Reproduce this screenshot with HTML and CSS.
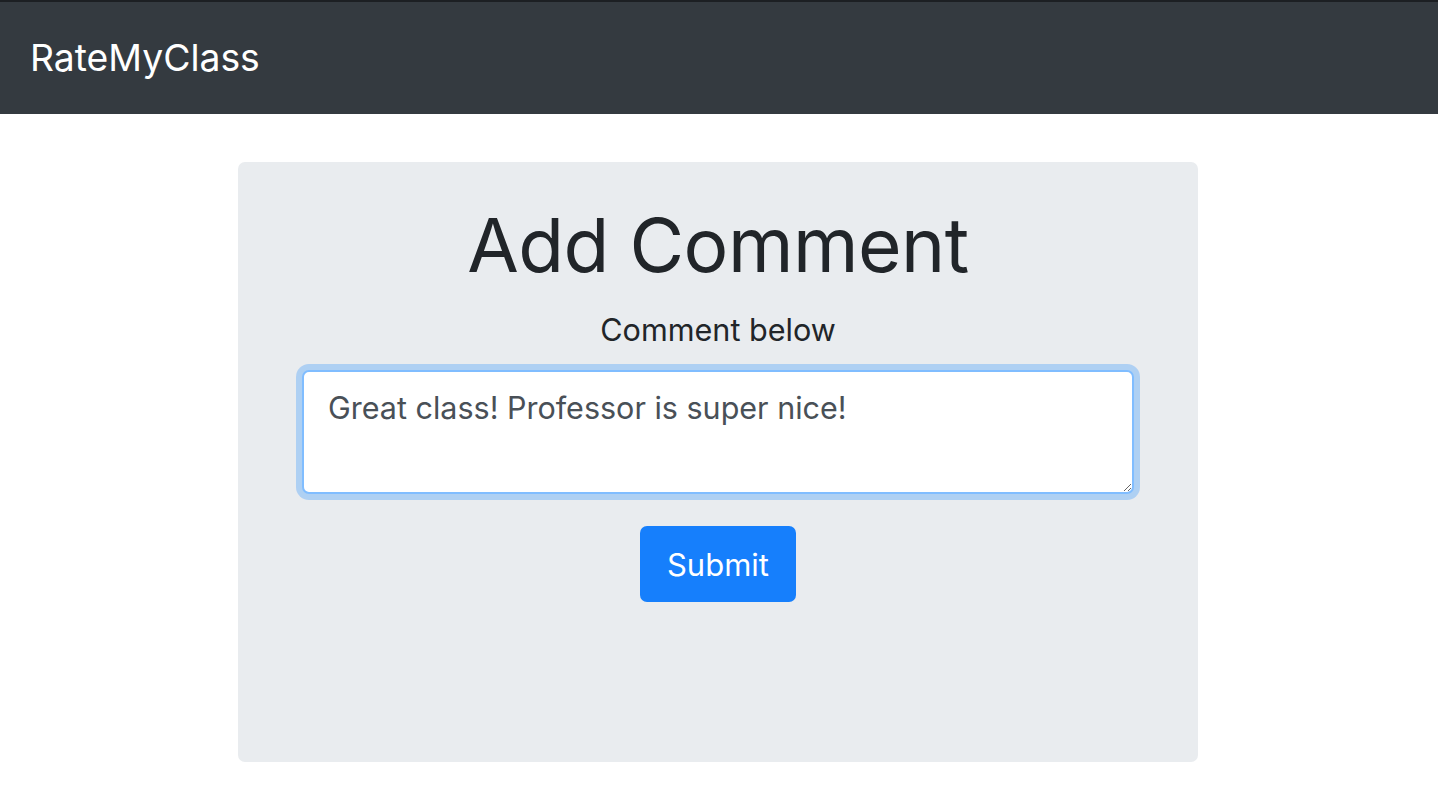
FILE: index.html
```html
<!DOCTYPE html>
<html lang="en">
<head>
<meta charset="utf-8">
<title>RateMyClass</title>
<link rel="stylesheet" href="styles.css">
</head>
<body>
<nav class="navbar">
  <a class="brand" href="#">RateMyClass</a>
</nav>
<main class="page">
  <section class="jumbo">
    <h1 class="title">Add Comment</h1>
    <form class="form">
      <label class="label" for="comment">Comment below</label>
      <textarea id="comment" class="textarea" autofocus>Great class! Professor is super nice!</textarea>
      <button type="button" class="btn">Submit</button>
    </form>
  </section>
</main>
</body>
</html>
```
FILE: styles.css
```css
* { box-sizing: border-box; }
html, body { margin: 0; padding: 0; background: #fff; }
body {
  font-family: Inter, "Noto Sans", "Liberation Sans", sans-serif;
  color: #212529;
}
.navbar {
  height: 114px;
  background: #343a40;
  border-top: 2px solid #1c1f23;
  display: flex;
  align-items: center;
  padding-left: 30px;
}
.brand {
  color: #fff;
  text-decoration: none;
  font-size: 37.3px;
  line-height: 1;
}
.page { display: flex; justify-content: center; padding: 48px 2px 0 0; }
.jumbo {
  width: 960px;
  height: 600px;
  background: #e9ecef;
  border-radius: 7px;
  padding-top: 36px;
  display: flex;
  flex-direction: column;
  align-items: center;
}
.title {
  margin: 0;
  font-size: 74.8px;
  font-weight: 400;
  line-height: 94px;
  letter-spacing: -0.5px;
}
.form { display: flex; flex-direction: column; align-items: center; }
.label {
  margin-top: 18px;
  font-size: 30.6px;
  line-height: 40px;
}
.textarea {
  margin-top: 20px;
  width: 832px;
  height: 124px;
  border: 2px solid #80bdff;
  border-radius: 7px;
  box-shadow: 0 0 0 6px rgba(0, 123, 255, 0.25);
  outline: none;
  padding: 16px 24px 14px;
  font-family: Inter, "Noto Sans", "Liberation Sans", sans-serif;
  font-size: 30.5px;
  line-height: 40px;
  color: #495057;
  background: #fff;
  resize: vertical;
}
.btn {
  margin-top: 32px;
  width: 156px;
  height: 76px;
  border: none;
  border-radius: 7px;
  background: #167ffc;
  color: #fff;
  font-family: Inter, "Noto Sans", "Liberation Sans", sans-serif;
  font-size: 31px;
  cursor: pointer;
}
```
